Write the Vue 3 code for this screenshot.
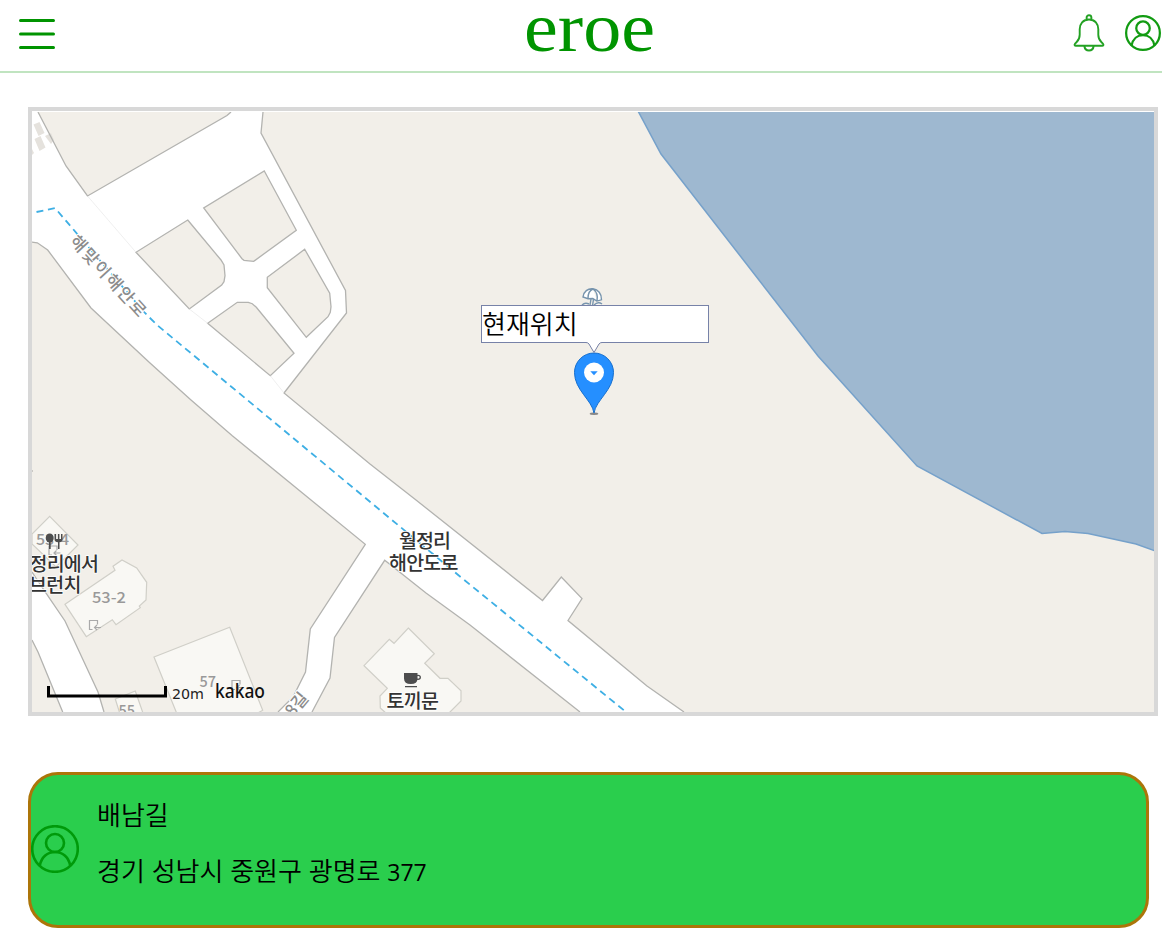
<script setup>
const blocks = [
  '264.3,171 296.3,230.3 253.7,261.3 244,260.3 242,258.7 203.7,208',
  '187.7,220 221,260 224,265 225,275.7 224,281.7 221.7,285 189.3,309 136,252.3',
  '304.7,249.3 329.7,293.3 331,306.7 330.3,312.3 328,316.7 306.3,337.3 267.3,287.7 267.3,277.3',
  '237.3,302.3 248.3,302.3 252.3,303.7 256.3,307.3 294,353.3 270.3,375.7 207.7,323.3',
]
const roads = [
  '30,112 38,112 66,166 87.5,196 227,115.5 231,112 263,112 261,133 345.5,290.5 346.5,313 284,393 370,464 416,500 542.5,600.5 561.3,577 582,598.5 568,620.5 647,686 684,712 580,712 470,625 426,593 384.7,560.3 334.5,637.5 330,678 312,712 278,712 293,697 305.5,672 310.3,629 365.3,544.3 311,500 232,435.5 191,400 150,363 91,308 47.7,250 37.3,242.8 30,242',
  '32,572 45,591.7 65,621 98,692 104,712 62.7,712 38,652 32,640',
]
const edges = [
  '38,112 66,166 87.5,196 227,115.5 231,112',
  '263,112 261,133 345.5,290.5 346.5,313 284,393 370,464 416,500 542.5,600.5 561.3,577 582,598.5 568,620.5 647,686 684,712',
  '30,242 37.3,242.8 47.7,250 91,308 150,363 191,400 232,435.5 311,500 365.3,544.3 310.3,629 305.5,672 293,697 278,712',
  '312,712 330,678 334.5,637.5 384.7,560.3 426,593 470,625 580,712',
  '32,572 45,591.7 65,621 98,692 104,712',
  '32,640 38,652 62.7,712',
]
const buildings = [
  '49.7,516.3 78,545 56,567 32,544 32,534',
  '65,604.3 115,570.3 113,566.3 122,560 136.7,568 146.7,582.3 146,600 139.3,606 140.3,607.7 116,624.7 112.3,619.7 86.3,636.7',
  '154,657 229.7,627.3 262.7,710.3 256,714 177,714',
  '115.3,699 135.3,691 143.3,714 120,714',
  '408.3,628 434.3,653.7 424.7,663.3 440,678.3 448,678.3 461,690.7 461,701 448,714 387,714 380.3,708 380,696 387.3,688.3 364,665.7 389.3,639.3 394,643.3',
]
const entrances = [[89.5, 620.5], [232, 680.5], [49, 546]]
</script>

<template>
  <div class="page">
    <header class="header">
      <svg class="menu" width="36" height="30" viewBox="0 0 36 30">
        <path d="M1.5 1.5h33M1.5 15h33M1.5 28.5h33" />
      </svg>
      <svg class="logo" width="134" height="60" viewBox="0 0 134 60">
        <text x="1" y="51.3" textLength="131" lengthAdjust="spacingAndGlyphs">eroe</text>
      </svg>
      <div class="actions">
        <svg class="icon bell" width="32" height="38" viewBox="0 0 32 38">
          <path d="M13.6 5.700V3.700a2.400 2.400 0 0 1 4.800 0v2M16 5.500c-6 0-9.300 4.400-9.300 9.800v5.400c0 3-.9 5.300-3 7.300l-1.600 1.600c-1 1-.5 2.200.8 2.200h26.200c1.300 0 1.800-1.200.8-2.200L28.300 28c-2.100-2-3-4.300-3-7.300v-5.400c0-5.400-3.300-9.800-9.300-9.800zM11.300 32c.4 2.800 2.100 4.500 4.700 4.500s4.300-1.700 4.700-4.500" />
        </svg>
        <svg class="icon user" width="36" height="36" viewBox="0 0 48 48">
          <circle cx="24" cy="24" r="22.500" />
          <circle cx="24" cy="17.500" r="9" />
          <path d="M8.800 40.500C10.500 32 16.500 26.800 24 26.800S37.500 32 39.200 40.500" />
        </svg>
      </div>
    </header>

    <section class="map">
      <svg class="canvas" width="1122" height="600" viewBox="32 112 1122 600">
        <rect class="land" x="32" y="112" width="1122" height="600" />
        <polygon class="sea" points="637.500,110 661,154 818,356 917,466 1042,533.5 1065,531.5 1088,533.5 1136,544 1157,551.500 1157,110" />
        <polygon v-for="p in roads" :key="p" class="road" :points="p" />
        <path class="crosswalk" d="M33.500 124.500l6-2.500 5 11-6 3zM45 136l6-3 3 7-3 4zM34.500 139l6-3 5 11.500-6 3.500zM32 149l2 4-2 2z" />
        <polyline v-for="p in edges" :key="p" class="edge" :points="p" />
        <polygon v-for="p in blocks" :key="p" class="block" :points="p" />
        <path class="seam" d="M87.500 196L136 252.300M189.300 309l18.400 14.300M270.300 375.700L284 393" />
        <polygon v-for="p in buildings" :key="p" class="building" :points="p" />
        <path class="edge" d="M32 470v2" />
        <path class="route" d="M36.500 212L55 208" />
        <path class="route" d="M58 211.500L145 313L157 325L457 574L626 712" />

        <g v-for="[x, y] in entrances" :key="x" :transform="`translate(${x} ${y})`">
          <path class="entrance" d="M8 4V0H0v9h3M11.500 7H5M7.500 4.500L5 7l2.500 2.500" />
        </g>

        <g class="street">
          <text transform="translate(69 242) rotate(47.500)" textLength="103">해맞이해안로</text>
          <text transform="translate(293 718) rotate(-50)">8길</text>
        </g>
        <g class="number">
          <text x="36" y="545" textLength="33" lengthAdjust="spacingAndGlyphs">53-4</text>
          <text x="92" y="602.500" textLength="34" lengthAdjust="spacingAndGlyphs">53-2</text>
          <text x="199.500" y="687" textLength="16.500" lengthAdjust="spacingAndGlyphs">57</text>
          <text x="118.500" y="716" textLength="16.500" lengthAdjust="spacingAndGlyphs">55</text>
        </g>
        <g class="dark">
          <ellipse cx="49.700" cy="538" rx="4" ry="4.500" />
          <path d="M49 541h1.700v8H49zM54.500 534h1.600v5h1.800v-5h1.500v5h1.600v-5h1.500v5q0 3-3 3.200v6.800H58v-6.800q-3.500-.2-3.500-3.200z" />
          <path d="M404 673h13.500v5.500q0 5.500-6.700 5.500T404 678.500zM405 686h12v1.200h-12z" />
          <ellipse class="handle" cx="418" cy="677.300" rx="2.300" ry="2" />
        </g>
        <g class="place">
          <text x="29.500" y="570.500" textLength="69.500">정리에서</text>
          <text x="29" y="591.500" textLength="52.500">브런치</text>
          <text x="399" y="547.500" textLength="52">월정리</text>
          <text x="389" y="570" textLength="69.500">해안도로</text>
          <text x="386.500" y="708" textLength="52.500">토끼문</text>
        </g>

        <path class="scale" d="M48.500 686v10h117v-10" />
        <text class="distance" x="172" y="698.500" textLength="32" lengthAdjust="spacingAndGlyphs">20m</text>
        <text class="provider" x="215" y="697.500" textLength="50" lengthAdjust="spacingAndGlyphs">kakao</text>

        <g class="beach">
          <path d="M583 297c.5-5.500 5-8.800 10-8.200s8.800 4.800 8.500 11l-4.700 1.300-4-2.600-4.800.2zM588 298.200c0-4 2-8 5-9.200M597 301c.9-4.500-.5-9.500-4-12M591 299l-1 6M593.500 299.500l-1 6M582 305q3-3 7-1M594 305q4-4 8-1" />
        </g>
        <ellipse class="shadow" cx="594" cy="413.700" rx="4.300" ry="1.200" />
        <path class="pin" d="M594 413C592 400 574.500 390 574.500 372.500a19.500 19.500 0 0 1 39 0C613.500 390 596 400 594 413z" />
        <circle class="pin-core" cx="594" cy="372.500" r="10" />
        <path class="pin-arrow" d="M590.300 371.200h7.400l-3.700 4z" />
      </svg>
      <div class="bubble">
        현재위치
        <svg class="tail" width="16" height="12" viewBox="0 0 16 12">
          <path d="M0 0h16v.500q-2 0-3 1.500L8 10.500 3 2Q2 .500 0 .500z" fill="#fff" />
          <path d="M0 .500q2 0 3 1.500l5 8.500 5-8.500q1-1.500 3-1.500" fill="none" stroke="#7782a8" />
        </svg>
      </div>
    </section>

    <section class="card">
      <svg class="icon avatar" width="48" height="48" viewBox="0 0 48 48">
        <circle cx="24" cy="24" r="22.800" />
        <circle cx="24" cy="18" r="9" />
        <path d="M8.800 40.500C10.500 32 16.500 27 24 27S37.500 32 39.200 40.500" />
      </svg>
      <div class="details">
        <p>배남길</p>
        <p>경기 성남시 중원구 광명로 <span class="digits">377</span></p>
      </div>
    </section>
  </div>
</template>

<style scoped>
.page {
  width: 1162px;
  height: 937px;
  overflow: hidden;
  background: #fff;
  font-family: "Noto Sans CJK KR", sans-serif;
}
.header {
  display: grid;
  grid-template-columns: 1fr 134px 1fr;
  height: 71px;
  border-bottom: 2px solid #c0e4c0;
}
.menu { margin: 19px 0 0 19px; }
.menu path { stroke: #009400; stroke-width: 3; stroke-linecap: round; }
.logo { margin-left: 9px; overflow: visible; }
.logo text { font: 70px/1 "Liberation Serif", serif; fill: #009400; }
.actions {
  display: flex;
  justify-content: flex-end;
  align-items: flex-start;
  gap: 20px;
  padding: 14px 1px 0 0;
}
.icon { fill: none; stroke: #23a123; flex: none; }
.bell { stroke-width: 1.9; }
.user { stroke: #129b12; stroke-width: 3; margin-top: 1px; }
.map {
  position: relative;
  box-sizing: border-box;
  width: 1130px;
  height: 609px;
  margin: 34px 0 0 28px;
  padding-top: 1px;
  border: 4px solid #d8d8d8;
}
.canvas { display: block; }
.land { fill: #f2efe9; }
.sea { fill: #9eb8d0; stroke: #76a1ca; stroke-width: 1.500; }
.road { fill: #fff; }
.crosswalk { fill: #e5e2dd; }
.edge { fill: none; stroke: #b3b3b0; stroke-width: 1.300; }
.block { fill: #f2efe9; stroke: #b3b3b0; stroke-width: 1.300; }
.seam { stroke: #e8e8e8; stroke-width: .700; }
.building { fill: #f9f8f4; stroke: #d0cfc8; stroke-width: 1.200; }
.route { fill: none; stroke: #3eafe4; stroke-width: 1.800; stroke-dasharray: 7 4.700; }
.entrance { fill: none; stroke: #aaa; stroke-width: 1.200; }
.street text {
  font-size: 17px;
  font-weight: 500;
  fill: #8c8c8c;
  stroke: #fff;
  stroke-width: 2px;
  paint-order: stroke;
}
.number text { font-size: 15px; font-weight: 500; fill: #999; }
.place text {
  font-size: 19.500px;
  font-weight: 500;
  fill: #333;
  stroke: #fff;
  stroke-width: 1.500px;
  paint-order: stroke;
}
.dark { fill: #4d4d4d; }
.handle { fill: none; stroke: #4d4d4d; stroke-width: 1.300; }
.scale { fill: none; stroke: #000; stroke-width: 3; }
.distance { font: 14px "DejaVu Sans", sans-serif; fill: #222; }
.provider { font: 500 19px "Noto Sans", sans-serif; fill: #111; }
.beach path { fill: #fff; stroke: #7794ad; stroke-width: 1.400; }
.shadow { fill: #888; }
.pin { fill: #258fff; stroke: #176fce; }
.pin-core { fill: #fff; }
.pin-arrow { fill: #258fff; }
.bubble {
  position: absolute;
  left: 449px;
  top: 194px;
  box-sizing: border-box;
  width: 228px;
  height: 38px;
  border: 1px solid #7782a8;
  background: #fff;
  color: #000;
  font-size: 26px;
  font-weight: 350;
  line-height: 33px;
}
.tail { position: absolute; left: 104px; top: 36px; }
.card {
  display: flex;
  align-items: center;
  box-sizing: border-box;
  width: 1121px;
  height: 156px;
  margin: 56px 0 0 28px;
  border: 3px solid #ac7509;
  border-radius: 30px;
  background: #2ace4d;
}
.avatar { stroke: #009a0a; stroke-width: 2.600; margin-top: -2px; }
.details { margin: -14px 0 0 18px; }
.details p {
  margin: 0;
  color: #000;
  font-size: 26px;
  font-weight: 350;
  line-height: 56px;
  white-space: pre;
  word-spacing: 1px;
}
.digits { font-family: "Open Sans", sans-serif; font-size: 23px; font-weight: 400; }
</style>
